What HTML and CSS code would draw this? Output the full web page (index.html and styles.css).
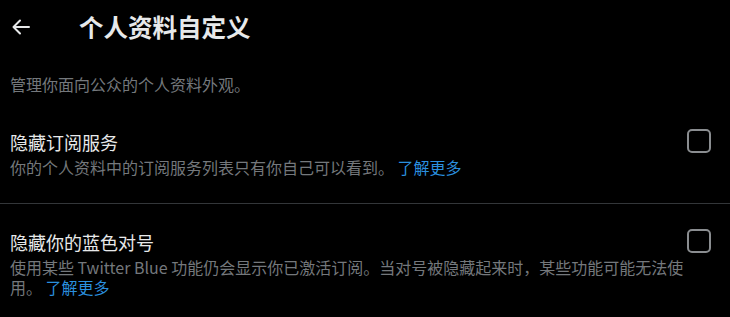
FILE: index.html
```html
<!DOCTYPE html>
<html lang="zh-CN">
<head>
    <meta charset="UTF-8">
    <meta name="viewport" content="width=device-width, initial-scale=1.0">
    <title>个人资料自定义</title>
    <link rel="stylesheet" href="styles.css">
</head>
<body>
    <!-- Top bar -->
    <header class="topbar">
        <svg class="back" viewBox="0 0 20 20" width="20" height="20">
            <path d="M18 10H3M9 3.5L2.5 10L9 16.5" fill="none" stroke="#e7e9ea" stroke-width="2" stroke-linecap="round" stroke-linejoin="round"/>
        </svg>
        <h1 class="title">个人资料自定义</h1>
    </header>

    <p class="intro">管理你面向公众的个人资料外观。</p>

    <!-- Option: subscriptions -->
    <div class="row first">
        <div class="row-text">
            <div class="row-title">隐藏订阅服务</div>
            <div class="row-desc">你的个人资料中的订阅服务列表只有你自己可以看到。 <a class="more" href="#">了解更多</a></div>
        </div>
        <span class="check"></span>
    </div>

    <div class="divider"></div>

    <!-- Option: blue check -->
    <div class="row">
        <div class="row-text">
            <div class="row-title">隐藏你的蓝色对号</div>
            <div class="row-desc">使用某些 Twitter Blue 功能仍会显示你已激活订阅。当对号被隐藏起来时，某些功能可能无法使用。 <a class="more" href="#">了解更多</a></div>
        </div>
        <span class="check"></span>
    </div>
</body>
</html>
```

FILE: styles.css
```css
body {
    margin: 0;
    background: #000;
    color: #e7e9ea;
    font-family: "Noto Sans CJK SC", "Noto Sans", sans-serif;
    overflow: hidden;
}

.topbar {
    height: 54px;
    display: flex;
    align-items: center;
    padding-left: 11px;
}

.back {
    display: block;
}

.title {
    margin: 0 0 0 48px;
    font-size: 24.5px;
    font-weight: bold;
    line-height: 30px;
}

.intro {
    margin: 20px 0 0;
    padding: 0 10px;
    font-size: 16px;
    line-height: 20px;
    color: #74787c;
}

.row {
    display: flex;
    align-items: flex-start;
    padding: 0 19px 0 10px;
}

.row.first {
    margin-top: 36px;
    padding-bottom: 26px;
}

.row-text {
    flex: 1;
}

.row-title {
    font-size: 18px;
    line-height: 24px;
}

.row-desc {
    margin-top: 3px;
    font-size: 16px;
    line-height: 20px;
    color: #74787c;
}

.more {
    color: #2a8fdf;
    text-decoration: none;
}

.check {
    width: 20px;
    height: 20px;
    margin-top: -1px;
    border: 2px solid #8a8d90;
    border-radius: 5px;
    flex-shrink: 0;
}

.divider {
    height: 1px;
    background: #333639;
    margin-bottom: 26px;
}
```
